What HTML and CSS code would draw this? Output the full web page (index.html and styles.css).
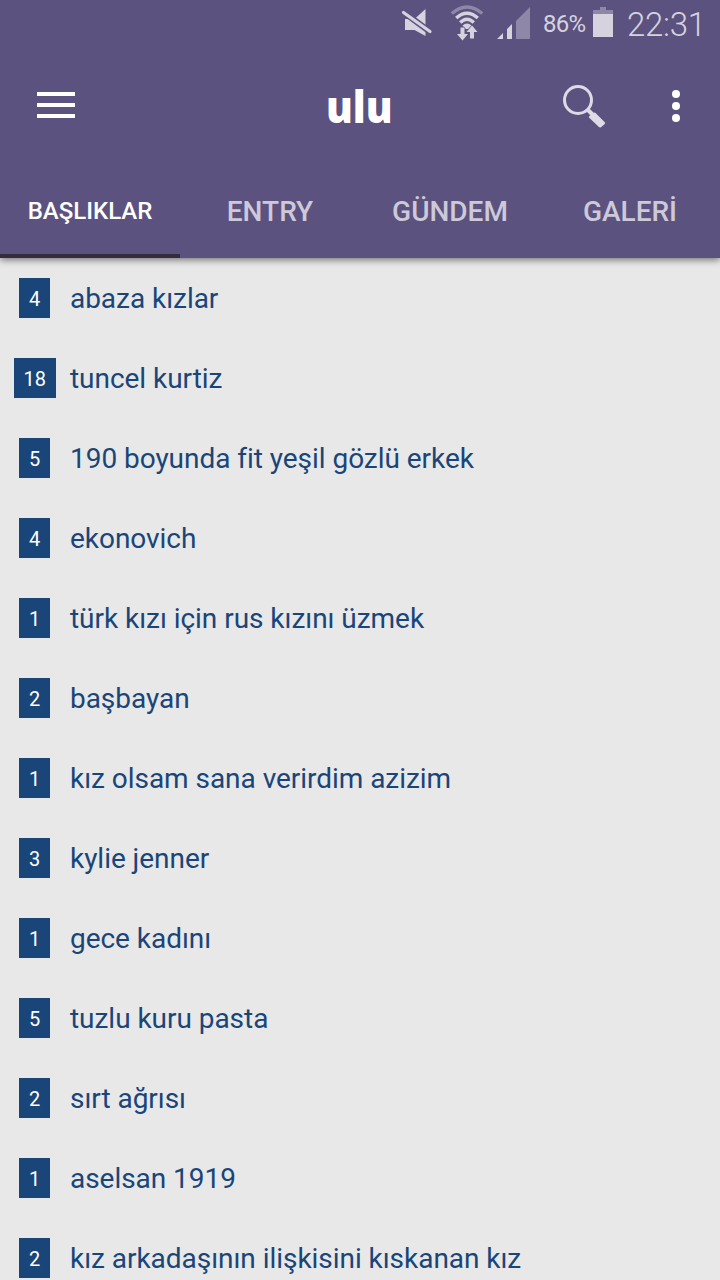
FILE: index.html
```
<!DOCTYPE html>
<html lang="tr">

<head>
    <meta charset="UTF-8">
    <meta name="viewport" content="width=device-width, initial-scale=1.0">
    <title>ulu</title>
    <link rel="stylesheet" href="styles.css">
</head>

<body>
    <header id="header">
        <div class="status-bar">
            <svg class="icon-mute" width="30" height="30" viewBox="0 0 30 30">
                <path d="M3 10h9.500L23.500 0v27L12.500 21H3z" fill="#d6d2de" />
                <path d="M0 2L29 23.500" stroke="#5c5280" stroke-width="6" />
                <path d="M1.500 3.500L28 22.500" stroke="#d6d2de" stroke-width="3.200" stroke-linecap="round" />
            </svg>
            <svg class="icon-wifi" width="34" height="36" viewBox="0 0 34 36" fill="none" stroke="#d6d2de" stroke-width="3.400">
                <path d="M1.800 8.500Q17-4.500 32.200 8.500" stroke="#8f87a8" />
                <path d="M6.200 13Q17 3.500 27.800 13" />
                <path d="M10.200 17.500Q17 11 23.800 17.500" />
                <path d="M12.500 20.500Q17 16.500 21.500 20.500L18 24h-2z" fill="#d6d2de" stroke="none" />
                <path d="M10.500 22.500h4V29h3.500L12.500 35.500 7 29h3.500zM20 33.500V27h-3.500L22 20.500 27.500 27H24v6.500z" fill="#d6d2de" stroke="#5c5280" stroke-width="1" paint-order="stroke" />
            </svg>
            <svg class="icon-signal" width="34" height="32" viewBox="0 0 34 32">
                <path d="M0 32l6-6v6zM10 32V22l5-5v15z" fill="#d6d2de" />
                <path d="M19 32V14L33 0v32z" fill="#8f87a8" />
            </svg>
            <span class="battery-text">86%</span>
            <svg class="icon-battery" width="20" height="30" viewBox="0 0 20 30">
                <path d="M0 3h7V0h6v3h7v4H0z" fill="#8f87a8" />
                <path d="M0 7h20v23H0z" fill="#d6d2de" />
            </svg>
            <span class="clock">22:31</span>
        </div>

        <div class="toolbar">
            <button class="menu-btn" aria-label="Menü">
                <span></span>
                <span></span>
                <span></span>
            </button>
            <h1 class="logo">ulu</h1>
            <button class="search-btn" aria-label="Ara">
                <svg width="44" height="44" viewBox="0 0 44 44">
                    <circle cx="16" cy="16" r="13.500" fill="none" stroke="#dedbe6" stroke-width="3" />
                    <path d="M25.500 25.500l5 5" stroke="#dedbe6" stroke-width="4" />
                    <path d="M32.500 30l9 9-3.500 3-9.500-9z" fill="#dedbe6" stroke="#dedbe6" stroke-width="3" stroke-linejoin="round" />
                </svg>
            </button>
            <button class="more-btn" aria-label="Diğer">
                <span></span>
                <span></span>
                <span></span>
            </button>
        </div>

        <nav class="tabs">
            <a class="tab active">BAŞLIKLAR</a>
            <a class="tab">ENTRY</a>
            <a class="tab">GÜNDEM</a>
            <a class="tab">GALERİ</a>
        </nav>
    </header>

    <ul id="topics">
        <li><div class="count"><span>4</span></div>abaza kızlar</li>
        <li><div class="count"><span>18</span></div>tuncel kurtiz</li>
        <li><div class="count"><span>5</span></div>190 boyunda fit yeşil gözlü erkek</li>
        <li><div class="count"><span>4</span></div>ekonovich</li>
        <li><div class="count"><span>1</span></div>türk kızı için rus kızını üzmek</li>
        <li><div class="count"><span>2</span></div>başbayan</li>
        <li><div class="count"><span>1</span></div>kız olsam sana verirdim azizim</li>
        <li><div class="count"><span>3</span></div>kylie jenner</li>
        <li><div class="count"><span>1</span></div>gece kadını</li>
        <li><div class="count"><span>5</span></div>tuzlu kuru pasta</li>
        <li><div class="count"><span>2</span></div>sırt ağrısı</li>
        <li><div class="count"><span>1</span></div>aselsan 1919</li>
        <li><div class="count"><span>2</span></div>kız arkadaşının ilişkisini kıskanan kız</li>
    </ul>
</body>

</html>
```

FILE: styles.css
```
* {
    box-sizing: border-box;
}

body {
    font-family: Roboto, "Noto Sans", sans-serif;
    margin: 0;
    height: 1280px;
    overflow: hidden;
    background: #e8e8e8;
    color: #1a4578;
}

button {
    padding: 0;
    border: none;
    background: none;
}

svg {
    display: block;
}

#header {
    position: relative;
    height: 258px;
    background: #5c5280;
    box-shadow: 0 2px 7px rgba(0, 0, 0, 0.5);
}

/* status bar */
.status-bar {
    display: flex;
    justify-content: flex-end;
    height: 50px;
    padding-right: 17px;
    color: #d6d2de;
}

.icon-mute {
    margin: 9px 18px 0 0;
    overflow: visible;
}

.icon-wifi {
    margin: 5px 13px 0 0;
}

.icon-signal {
    margin: 7px 12px 0 0;
}

.battery-text {
    width: 43px;
    margin-right: 7px;
    font-size: 24px;
    line-height: 48px;
    letter-spacing: -0.7px;
    white-space: nowrap;
}

.icon-battery {
    margin: 7px 14px 0 0;
}

.clock {
    width: 76px;
    font-size: 33px;
    font-weight: 350;
    line-height: 49px;
    letter-spacing: -0.3px;
    white-space: nowrap;
}

/* toolbar */
.toolbar {
    display: flex;
    align-items: center;
    height: 112px;
    padding: 0 40px 0 37px;
}

.menu-btn {
    display: flex;
    flex-direction: column;
    gap: 7px;
    width: 38px;
    margin-top: -2px;
}

.menu-btn span {
    height: 4px;
    background: #fff;
}

.logo {
    width: 70px;
    margin: 0 0 0 251px;
    font-family: "Open Sans", sans-serif;
    font-size: 44px;
    font-weight: 800;
    line-height: 50px;
    color: #fff;
    transform: scaleX(0.91);
    transform-origin: left;
}

.search-btn {
    margin-left: auto;
}

.more-btn {
    display: flex;
    flex-direction: column;
    gap: 4px;
    margin-left: 66px;
}

.more-btn span {
    width: 8px;
    height: 8px;
    border-radius: 50%;
    background: #fff;
}

/* tabs */
.tabs {
    display: flex;
    height: 96px;
}

.tab {
    flex: 1;
    border-bottom: 4px solid transparent;
    font-size: 28px;
    font-weight: 500;
    line-height: 100px;
    text-align: center;
    color: #cdc9d8;
}

.tab.active {
    border-bottom-color: #332d3f;
    font-size: 24px;
    line-height: 98px;
    color: #fff;
}

/* topic list */
#topics {
    margin: 0;
    padding: 0;
    list-style: none;
}

#topics li {
    display: flex;
    align-items: center;
    height: 80px;
    font-size: 28px;
    letter-spacing: -0.04px;
    white-space: nowrap;
}

.count {
    display: flex;
    justify-content: center;
    width: 70px;
    padding-right: 0.6px;
}

.count span {
    height: 40px;
    padding: 0 9.8px;
    background: #1a4578;
    color: #fff;
    font-size: 20px;
    line-height: 42px;
    letter-spacing: 0;
}
```
